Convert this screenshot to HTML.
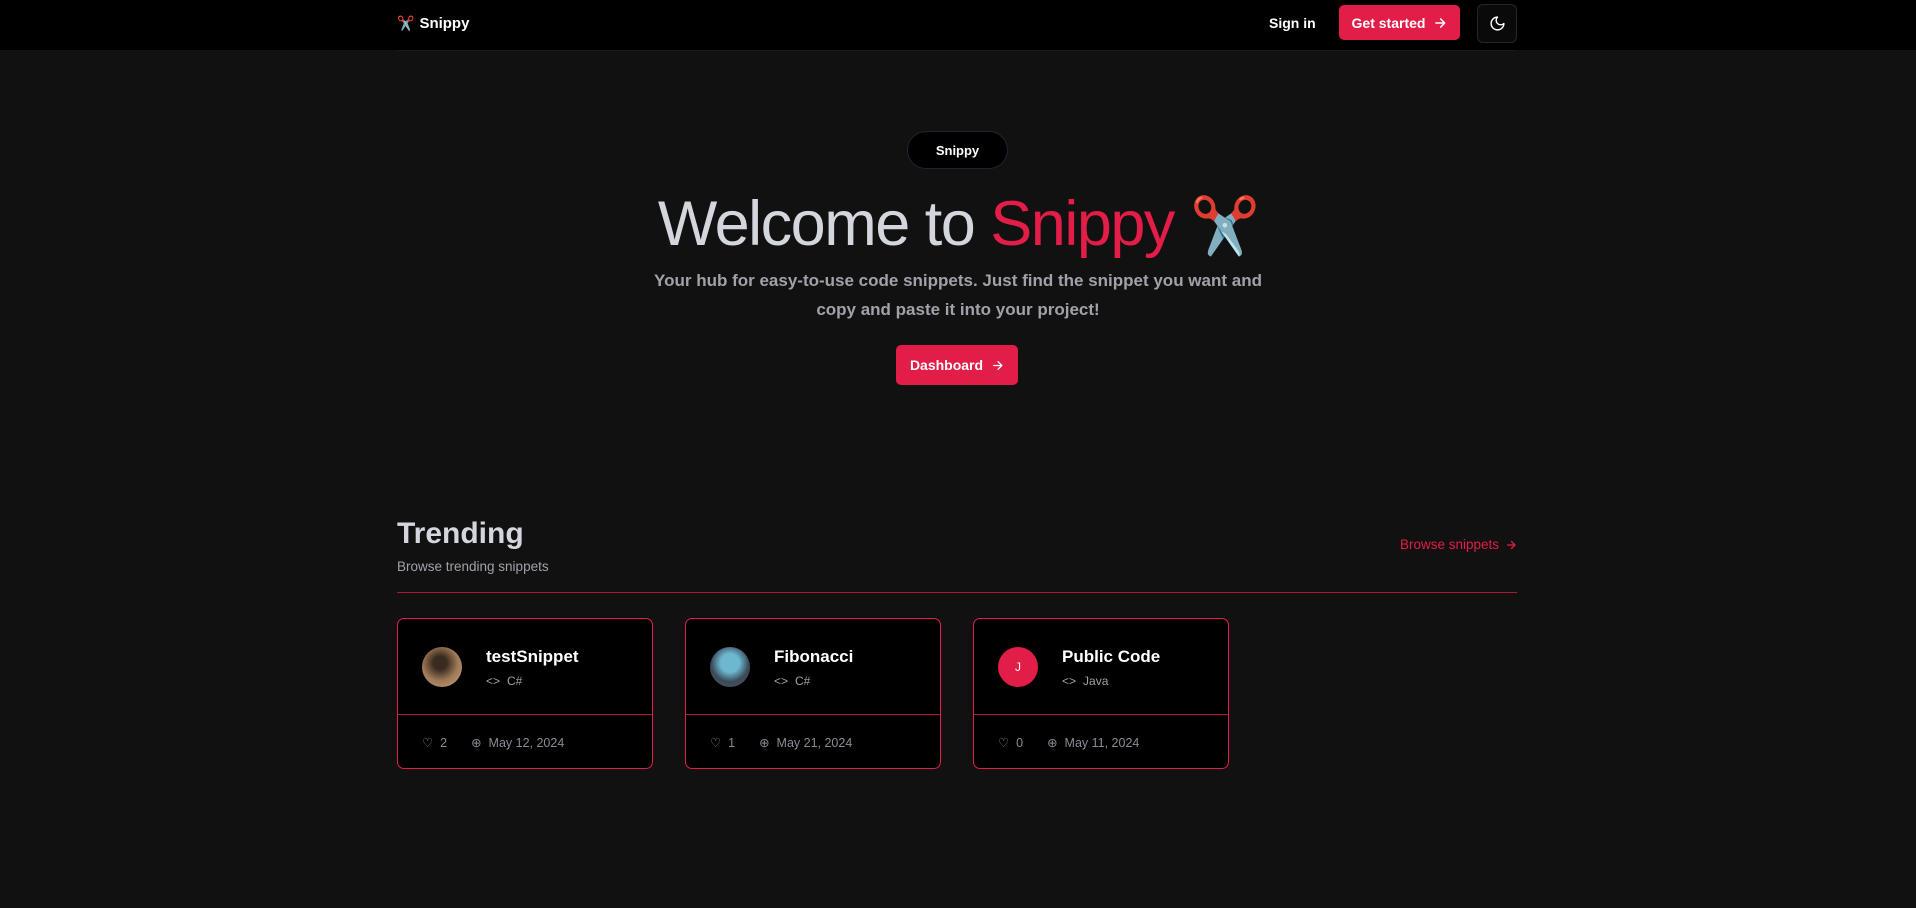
<!DOCTYPE html>
<html><head><meta charset="utf-8"><style>
*{box-sizing:border-box;margin:0;padding:0}
body{width:1916px;height:908px;background:#111111;font-family:"Liberation Sans",sans-serif;color:#fff;overflow:hidden;position:relative}
.nav{position:absolute;left:0;top:0;width:1916px;height:50px;background:#000}
.navline{position:absolute;left:397px;top:50px;width:1120px;height:1px;background:#151a22}
.abs{position:absolute}
.btn{background:#e11d48;border-radius:5px;color:#fff;font-weight:bold;font-size:14px;display:flex;align-items:center;justify-content:center;gap:8px}
.card{position:absolute;top:618px;width:256px;height:151px;background:#000;border:1px solid #e11d48;border-radius:7px}
.card .div{position:absolute;left:0;right:0;top:95px;height:1px;background:#e11d48;opacity:.8}
.av{position:absolute;left:24px;top:28px;width:40px;height:40px;border-radius:50%}
.tt{position:absolute;left:88px;top:28px;font-size:17px;font-weight:bold}
.lang{position:absolute;left:88px;top:55px;font-size:12px;color:#a1a1aa;display:flex;gap:7px;align-items:center}
.ft{position:absolute;left:24px;top:116px;font-size:12.5px;color:#8a8a93;display:flex;align-items:center}
</style></head><body>
<div class="nav"></div><div class="navline"></div>
<div class="abs" style="left:397px;top:15px;font-size:15px;font-weight:bold;display:flex;align-items:center;gap:5px"><span style="font-size:14px">✂️</span>Snippy</div>
<div class="abs" style="left:1269px;top:15px;font-size:14px;font-weight:bold">Sign in</div>
<div class="abs btn" style="left:1339px;top:5px;width:121px;height:35px">Get started <svg width="14" height="14" viewBox="0 0 24 24" fill="none" stroke="#fff" stroke-width="2.5" stroke-linecap="round" stroke-linejoin="round"><path d="M5 12h14M13 5l7 7-7 7"/></svg></div>
<div class="abs" style="left:1477px;top:4px;width:40px;height:39px;border:1px solid #27272a;border-radius:6px;background:#0a0a0a;display:flex;align-items:center;justify-content:center"><svg width="17" height="17" viewBox="0 0 24 24" fill="none" stroke="#fff" stroke-width="2" stroke-linecap="round" stroke-linejoin="round"><path d="M12 3a6 6 0 0 0 9 9 9 9 0 1 1-9-9z"/></svg></div>

<div class="abs" style="left:907px;top:131px;width:101px;height:38px;background:#000;border:1px solid #1e2530;border-radius:19px;display:flex;align-items:center;justify-content:center;font-size:13px;font-weight:bold">Snippy</div>
<div class="abs" style="left:0;width:1916px;top:186px;text-align:center;font-size:63px;color:#d4d6dd;letter-spacing:-1.5px;line-height:76px">Welcome to <span style="color:#e11d48">Snippy</span> <span style="font-size:56px">✂️</span></div>
<div class="abs" style="left:0;width:1916px;top:266px;text-align:center;font-size:17px;color:#a1a1aa;line-height:29px;font-weight:bold">Your hub for easy-to-use code snippets. Just find the snippet you want and<br>copy and paste it into your project!</div>
<div class="abs btn" style="left:896px;top:345px;width:122px;height:40px">Dashboard <svg width="13" height="13" viewBox="0 0 24 24" fill="none" stroke="#fff" stroke-width="2.5" stroke-linecap="round" stroke-linejoin="round"><path d="M5 12h14M13 5l7 7-7 7"/></svg></div>

<div class="abs" style="left:397px;top:517px;font-size:30px;font-weight:bold;color:#d4d6dd">Trending</div>
<div class="abs" style="left:397px;top:559px;font-size:13.5px;color:#a1a1aa">Browse trending snippets</div>
<div class="abs" style="left:1372px;top:537px;width:145px;font-size:13.5px;color:#e11d48;display:flex;align-items:center;gap:6px;justify-content:flex-end">Browse snippets <svg width="12" height="12" viewBox="0 0 24 24" fill="none" stroke="#e11d48" stroke-width="2.5" stroke-linecap="round" stroke-linejoin="round"><path d="M5 12h14M13 5l7 7-7 7"/></svg></div>
<div class="abs" style="left:397px;top:592px;width:1120px;height:1px;background:#b0173b"></div>

<div class="card" style="left:397px"><div class="av" style="background:radial-gradient(circle at 45% 40%,#3a2a20 20%,#a07a58 55%,#c9a27c)"></div><div class="tt">testSnippet</div><div class="lang"><span>&lt;&gt;</span>C#</div><div class="div"></div><div class="ft">♡&nbsp;&nbsp;2<span style="margin-left:24px">⊕&nbsp;&nbsp;May 12, 2024</span></div></div>
<div class="card" style="left:685px"><div class="av" style="background:radial-gradient(circle at 50% 40%,#6db7cf 30%,#3b4a5a 60%,#555)"></div><div class="tt">Fibonacci</div><div class="lang"><span>&lt;&gt;</span>C#</div><div class="div"></div><div class="ft">♡&nbsp;&nbsp;1<span style="margin-left:24px">⊕&nbsp;&nbsp;May 21, 2024</span></div></div>
<div class="card" style="left:973px"><div class="av" style="background:#e11d48;display:flex;align-items:center;justify-content:center;font-size:12px">J</div><div class="tt">Public Code</div><div class="lang"><span>&lt;&gt;</span>Java</div><div class="div"></div><div class="ft">♡&nbsp;&nbsp;0<span style="margin-left:24px">⊕&nbsp;&nbsp;May 11, 2024</span></div></div>
</body></html>
